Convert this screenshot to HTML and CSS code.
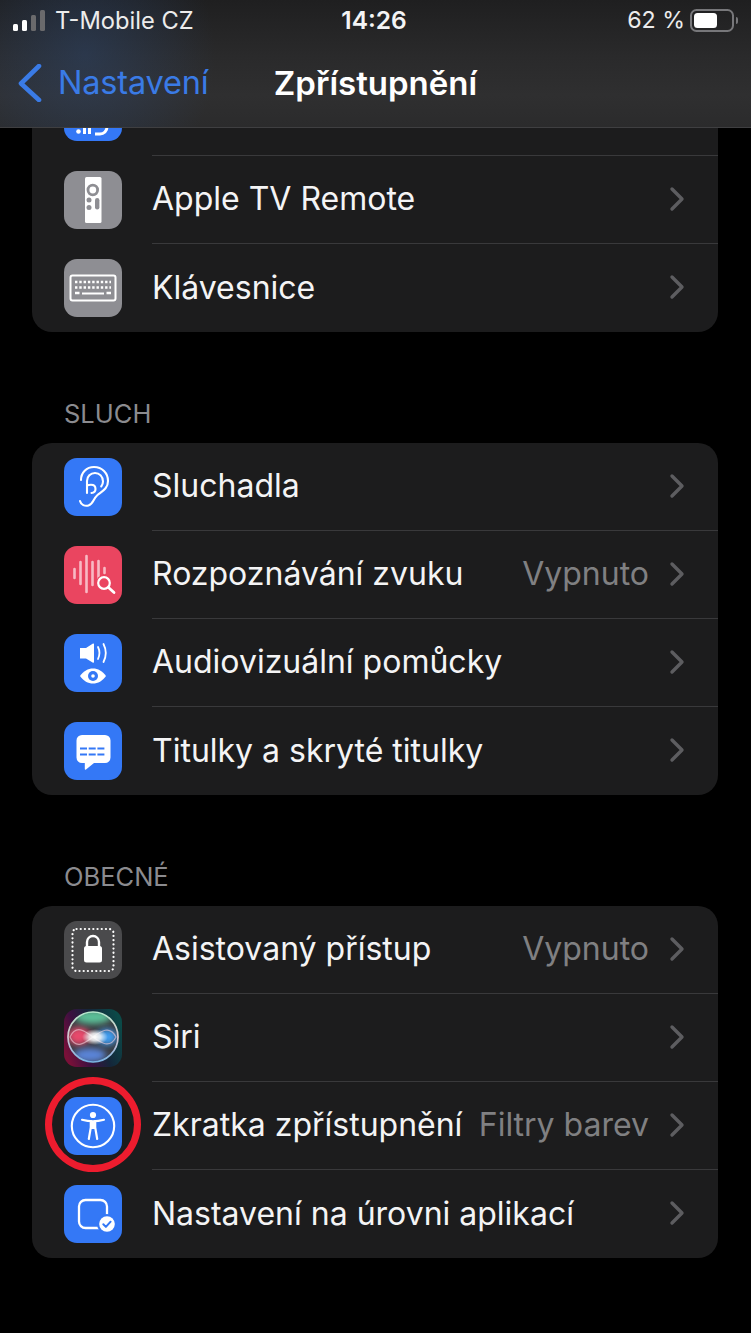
FILE: index.html
```html
<!DOCTYPE html>
<html lang="cs">
<head>
<meta charset="utf-8">
<title>Zpřístupnění</title>
<link rel="stylesheet" href="styles.css">
</head>
<body>
<div class="screen">
  <header class="top">
    <div class="status">
      <div class="status-left">
        <div class="signal"><i class="b1"></i><i class="b2"></i><i class="b3"></i><i class="b4"></i></div>
        <span class="carrier">T-Mobile CZ</span>
      </div>
      <span class="time">14:26</span>
      <div class="status-right">
        <span class="pct">62 %</span>
        <div class="battery"><div class="battery-fill"></div></div>
        <div class="battery-nub"></div>
      </div>
    </div>
    <div class="nav">
      <svg class="back-icon" width="24" height="38" viewBox="0 0 24 38"><path d="M21 2 3 19.500 21 36" fill="none" stroke="#3a7be6" stroke-width="4.600" stroke-linecap="round" stroke-linejoin="round"/></svg>
      <span class="back-label">Nastavení</span>
      <span class="title">Zpřístupnění</span>
    </div>
  </header>

  <main class="content">
    <section class="group">
      <div class="row">
        <svg class="icon" viewBox="0 0 58 58"><rect width="58" height="58" rx="13" fill="#3478f6"/><circle cx="14.500" cy="48.500" r="2.300" fill="#fff"/><path d="M20.500 51V43M25.500 51V38M31 51h5a7 7 0 0 0 7-7v-6" fill="none" stroke="#fff" stroke-width="3"/></svg>
        <div class="row-body"><span class="label"></span></div>
      </div>
      <div class="row">
        <svg class="icon" viewBox="0 0 58 58"><rect width="58" height="58" rx="13" fill="#8e8e93"/><rect x="21" y="6" width="16.500" height="46" rx="1.500" fill="#fff"/><circle cx="28.800" cy="19" r="4.800" fill="#fff" stroke="#8e8e93" stroke-width="2.800"/><circle cx="25" cy="29" r="2.500" fill="#8e8e93"/><circle cx="25" cy="36.500" r="2.500" fill="#8e8e93"/><rect x="31" y="27" width="4.400" height="11.500" rx="2.200" fill="#8e8e93"/></svg>
        <div class="row-body"><span class="label">Apple TV Remote</span><svg class="chev" viewBox="0 0 16 26"><path d="M3 3l10 10L3 23"/></svg></div>
      </div>
      <div class="row">
        <svg class="icon" viewBox="0 0 58 58"><rect width="58" height="58" rx="13" fill="#8e8e93"/><rect x="6.500" y="16.500" width="45" height="25" rx="2" fill="none" stroke="#fff" stroke-width="2"/><path d="M11 23h36M11 28.500h36" fill="none" stroke="#fff" stroke-width="2.400" stroke-dasharray="2.400 1.900"/><path d="M11 34h4.500M42.500 34H47" fill="none" stroke="#fff" stroke-width="2.400"/><path d="M18 34.500h22" fill="none" stroke="#fff" stroke-width="2"/></svg>
        <div class="row-body"><span class="label">Klávesnice</span><svg class="chev" viewBox="0 0 16 26"><path d="M3 3l10 10L3 23"/></svg></div>
      </div>
    </section>

    <h2 class="section-title">SLUCH</h2>
    <section class="group">
      <div class="row">
        <svg class="icon" viewBox="0 0 58 58"><rect width="58" height="58" rx="13" fill="#3478f6"/><g fill="none" stroke="#fff" stroke-width="2.100" stroke-linecap="round"><path d="M16 43c1 4 5 5.500 8.500 4.500 5-1.500 4.500-6.500 9-10.500 4-3.500 10.500-6 10.500-14 0-8-6-14-14-14-7.500 0-13 5.500-13 13"/><path d="M23 35V23c0-4.500 3.500-8 8-8s8 3.500 8 8.500c0 2-.6 3.500-1.800 5"/><path d="M23 27.500c1-.5 2.500-.8 4-.8 3 0 4.500 1.800 4.500 4.300 0 2.300-1.800 3.800-4 4"/></g></svg>
        <div class="row-body"><span class="label">Sluchadla</span><svg class="chev" viewBox="0 0 16 26"><path d="M3 3l10 10L3 23"/></svg></div>
      </div>
      <div class="row">
        <svg class="icon" viewBox="0 0 58 58"><rect width="58" height="58" rx="13" fill="#ea4560"/><path d="M10.500 23v9M16.500 16v22M22.500 10v36M28.500 16v23M34.500 15v21M40.500 22v5" fill="none" stroke="#f8b9c4" stroke-width="2.600" stroke-linecap="round"/><circle cx="40" cy="37" r="8" fill="#ea4560"/><circle cx="40" cy="37" r="5.800" fill="none" stroke="#fff" stroke-width="2.200"/><path d="M44.500 41.500 50 46.500" stroke="#fff" stroke-width="2.800" stroke-linecap="round"/></svg>
        <div class="row-body"><span class="label">Rozpoznávání zvuku</span><span class="value">Vypnuto</span><svg class="chev" viewBox="0 0 16 26"><path d="M3 3l10 10L3 23"/></svg></div>
      </div>
      <div class="row">
        <svg class="icon" viewBox="0 0 58 58"><rect width="58" height="58" rx="13" fill="#3478f6"/><path d="M16 14h6l7-4.500c.6-.3 1 0 1 .6v18c0 .6-.4.9-1 .6L22 24.500h-6z" fill="#fff"/><path d="M34 13c1.800 3.500 1.800 8 0 12M39.500 10c2.800 5.500 2.800 12.500 0 18" fill="none" stroke="#fff" stroke-width="1.800" stroke-linecap="round"/><path d="M16 42c3.500-5 8-7.500 13-7.500S38.500 37 42 42c-3.500 5-8 7.500-13 7.500S19.500 47 16 42z" fill="#fff"/><circle cx="29" cy="42" r="5" fill="#3478f6"/><circle cx="29" cy="42" r="1.800" fill="#fff"/></svg>
        <div class="row-body"><span class="label">Audiovizuální pomůcky</span><svg class="chev" viewBox="0 0 16 26"><path d="M3 3l10 10L3 23"/></svg></div>
      </div>
      <div class="row">
        <svg class="icon" viewBox="0 0 58 58"><rect width="58" height="58" rx="13" fill="#3478f6"/><path d="M18 13h23a5.500 5.500 0 0 1 5.500 5.500v17A5.500 5.500 0 0 1 41 41H30l-8 6.500c-.7.500-1.200.1-1.200-.6V41H18a5.500 5.500 0 0 1-5.500-5.500v-17A5.500 5.500 0 0 1 18 13z" fill="#fff"/><path d="M16 26.500h26M16 32.500h26" fill="none" stroke="#3478f6" stroke-width="2" stroke-dasharray="7 1.700"/></svg>
        <div class="row-body"><span class="label">Titulky a skryté titulky</span><svg class="chev" viewBox="0 0 16 26"><path d="M3 3l10 10L3 23"/></svg></div>
      </div>
    </section>

    <h2 class="section-title">OBECNÉ</h2>
    <section class="group">
      <div class="row">
        <svg class="icon" viewBox="0 0 58 58"><rect width="58" height="58" rx="13" fill="#4a4a4c"/><rect x="8.500" y="8" width="41" height="42" rx="4" fill="none" stroke="#fff" stroke-width="2.200" stroke-dasharray="0.100 4.100" stroke-linecap="round"/><rect x="20" y="25" width="18" height="16.500" rx="2.500" fill="#fff"/><path d="M23 26v-5a6 6 0 0 1 12 0v5" fill="none" stroke="#fff" stroke-width="2.400"/></svg>
        <div class="row-body"><span class="label">Asistovaný přístup</span><span class="value">Vypnuto</span><svg class="chev" viewBox="0 0 16 26"><path d="M3 3l10 10L3 23"/></svg></div>
      </div>
      <div class="row">
        <svg class="icon" viewBox="0 0 58 58">
          <defs>
            <linearGradient id="siriBg" x1="0" y1="0.700" x2="1" y2="0.300"><stop offset="0" stop-color="#7a1038"/><stop offset=".3" stop-color="#3c1040"/><stop offset=".6" stop-color="#14263a"/><stop offset="1" stop-color="#0b4a48"/></linearGradient>
            <linearGradient id="siriRing" x1="0" y1="0" x2="0" y2="1"><stop offset="0" stop-color="#b4e8cc"/><stop offset=".5" stop-color="#d8c4d0"/><stop offset="1" stop-color="#78b4e4"/></linearGradient>
            <radialGradient id="siriCore"><stop offset="0" stop-color="#fff"/><stop offset=".45" stop-color="#fff" stop-opacity=".8"/><stop offset="1" stop-color="#fff" stop-opacity="0"/></radialGradient>
            <filter id="siriBlur" x="-30%" y="-30%" width="160%" height="160%"><feGaussianBlur stdDeviation="3"/></filter>
            <filter id="siriBlurS" x="-30%" y="-30%" width="160%" height="160%"><feGaussianBlur stdDeviation="0.600"/></filter>
            <clipPath id="siriClip"><circle cx="29" cy="28" r="25"/></clipPath>
          </defs>
          <rect width="58" height="58" rx="13" fill="url(#siriBg)"/>
          <circle cx="29" cy="28" r="25.500" fill="#3a3c42"/>
          <g clip-path="url(#siriClip)">
            <ellipse cx="15" cy="27" rx="11" ry="9" fill="#e8486c" filter="url(#siriBlur)"/>
            <ellipse cx="43" cy="28" rx="10" ry="8" fill="#3f9cf0" filter="url(#siriBlur)"/>
            <ellipse cx="29" cy="8" rx="18" ry="7" fill="#5cc098" filter="url(#siriBlur)"/>
            <ellipse cx="26" cy="46" rx="16" ry="7" fill="#5a84d8" filter="url(#siriBlur)"/>
            <path d="M6 28c6-13 15-6 23 0s17 12 23 0c-6-12-15-6-23 0S12 41 6 28z" fill="none" stroke="#f4d0dc" stroke-opacity=".6" stroke-width="1.200" filter="url(#siriBlurS)"/>
          </g>
          <circle cx="29" cy="28" r="25" fill="none" stroke="url(#siriRing)" stroke-width="1.700"/>
          <ellipse cx="31" cy="28" rx="13" ry="8" fill="url(#siriCore)"/>
        </svg>
        <div class="row-body"><span class="label">Siri</span><svg class="chev" viewBox="0 0 16 26"><path d="M3 3l10 10L3 23"/></svg></div>
      </div>
      <div class="row">
        <svg class="icon" viewBox="0 0 58 58"><rect width="58" height="58" rx="13" fill="#3478f6"/><circle cx="29" cy="29" r="21.200" fill="none" stroke="#fff" stroke-width="2.100"/><circle cx="29" cy="18" r="3.100" fill="#fff"/><path d="M18 22.800c3.800 1 7.300 1.500 11 1.500s7.200-.5 11-1.500" fill="none" stroke="#fff" stroke-width="2.100" stroke-linecap="round"/><path d="M26.800 24v6.500L24.800 42M31.200 24v6.500L33.200 42M26.800 31h4.400" fill="none" stroke="#fff" stroke-width="2.200" stroke-linecap="round"/><rect x="26.800" y="24" width="4.400" height="8" fill="#fff"/></svg>
        <div class="row-body"><span class="label">Zkratka zpřístupnění</span><span class="value">Filtry barev</span><svg class="chev" viewBox="0 0 16 26"><path d="M3 3l10 10L3 23"/></svg></div>
        <div class="highlight"></div>
      </div>
      <div class="row">
        <svg class="icon" viewBox="0 0 58 58"><rect width="58" height="58" rx="13" fill="#3478f6"/><rect x="15" y="15" width="28" height="28" rx="6.500" fill="none" stroke="#fff" stroke-width="2.300"/><circle cx="43" cy="39" r="10" fill="#3478f6"/><circle cx="43" cy="39" r="7.800" fill="#fff"/><path d="M39.300 39.200l2.600 2.700 4.700-5.200" fill="none" stroke="#3478f6" stroke-width="2" stroke-linecap="round" stroke-linejoin="round"/></svg>
        <div class="row-body"><span class="label">Nastavení na úrovni aplikací</span><svg class="chev" viewBox="0 0 16 26"><path d="M3 3l10 10L3 23"/></svg></div>
      </div>
    </section>
  </main>
</div>
</body>
</html>
```

FILE: styles.css
```css
* { box-sizing: border-box; }
html, body { margin: 0; padding: 0; background: #000; }
body {
  font-family: "Inter", "Noto Sans", "Liberation Sans", sans-serif;
  color: #f4f4f5;
  overflow: hidden;
}
.screen {
  position: relative;
  width: 751px;
  height: 1333px;
  overflow: hidden;
  background: #000;
}

.top {
  position: absolute;
  z-index: 2;
  top: 0;
  left: 0;
  right: 0;
  height: 128px;
  border-bottom: 1px solid #3f3f41;
  background:
    radial-gradient(ellipse 130px 150px at 85px 55px, rgba(46, 76, 122, .42), rgba(46, 76, 122, 0)),
    linear-gradient(180deg, #1f1f20 0%, #2a2a2b 45%, #2f2f30 75%, #2b2b2c 100%);
}
.status {
  position: relative;
  height: 40px;
  display: flex;
  align-items: center;
  justify-content: space-between;
  padding: 0 13px;
}
.status-left { display: flex; align-items: center; gap: 10px; }
.signal { display: flex; align-items: flex-end; gap: 4px; height: 21px; margin-top: 1px; }
.signal i { display: block; width: 5px; border-radius: 1.500px; background: #6a6a6c; }
.signal .b1 { height: 7px; background: #fff; }
.signal .b2 { height: 11px; background: #fff; }
.signal .b3 { height: 16px; }
.signal .b4 { height: 21px; }
.carrier { font-size: 23.700px; color: #ececec; }
.time {
  position: absolute;
  left: 0;
  right: 3px;
  text-align: center;
  font-size: 24.500px;
  font-weight: 600;
}
.status-right { display: flex; align-items: center; }
.pct { font-size: 23.200px; margin-right: 5px; color: #ececec; }
.battery {
  width: 44px;
  height: 23px;
  border: 2px solid #77777a;
  border-radius: 6.500px;
  padding: 2px;
}
.battery-fill { width: 23px; height: 15px; background: #fff; border-radius: 3.500px; }
.battery-nub { width: 2px; height: 7px; margin-left: 2px; border-radius: 0 2px 2px 0; background: #77777a; }

.nav { position: relative; height: 87px; display: flex; align-items: center; padding: 0 0 2px 18px; }
.back-icon { margin: 1px 16px 0 0; flex: none; }
.back-label { font-size: 32.500px; letter-spacing: -.2px; color: #3a7be6; }
.title {
  position: absolute;
  left: 0;
  right: 0;
  text-align: center;
  font-size: 33px;
  font-weight: 600;
  color: #fff;
}

/* Scrolled list: first row starts under the header */
.content { padding: 68px 33px 0 32px; }
.group { background: #1c1c1d; border-radius: 20px; }
.section-title {
  margin: 69px 0 16px 32px;
  height: 26px;
  line-height: 26px;
  font-size: 25.500px;
  font-weight: 400;
  color: #8b8b8f;
}
.row {
  position: relative;
  height: 88px;
  display: flex;
  align-items: center;
  padding-left: 32px;
}
.icon { display: block; width: 58px; height: 58px; flex: none; }
.row-body {
  flex: 1;
  height: 100%;
  margin-left: 30px;
  padding: 0 33px 2px 0;
  display: flex;
  align-items: center;
  border-bottom: 1px solid #39393b;
}
.row:last-child .row-body { border-bottom: 0; }
.label { flex: 1; font-size: 32px; white-space: nowrap; color: #f4f4f5; }
.value { font-size: 32px; color: #808082; white-space: nowrap; margin-right: 20px; }
.chev { display: block; width: 16px; height: 26px; flex: none; }
.chev path { fill: none; stroke: #5d5d60; stroke-width: 3.400; stroke-linecap: round; stroke-linejoin: round; }

/* Hand-drawn red annotation around the shortcut icon */
.highlight {
  position: absolute;
  left: 13px;
  top: -5px;
  width: 96px;
  height: 95px;
  border: 7px solid #ed1c2e;
  border-radius: 50%;
}
```
